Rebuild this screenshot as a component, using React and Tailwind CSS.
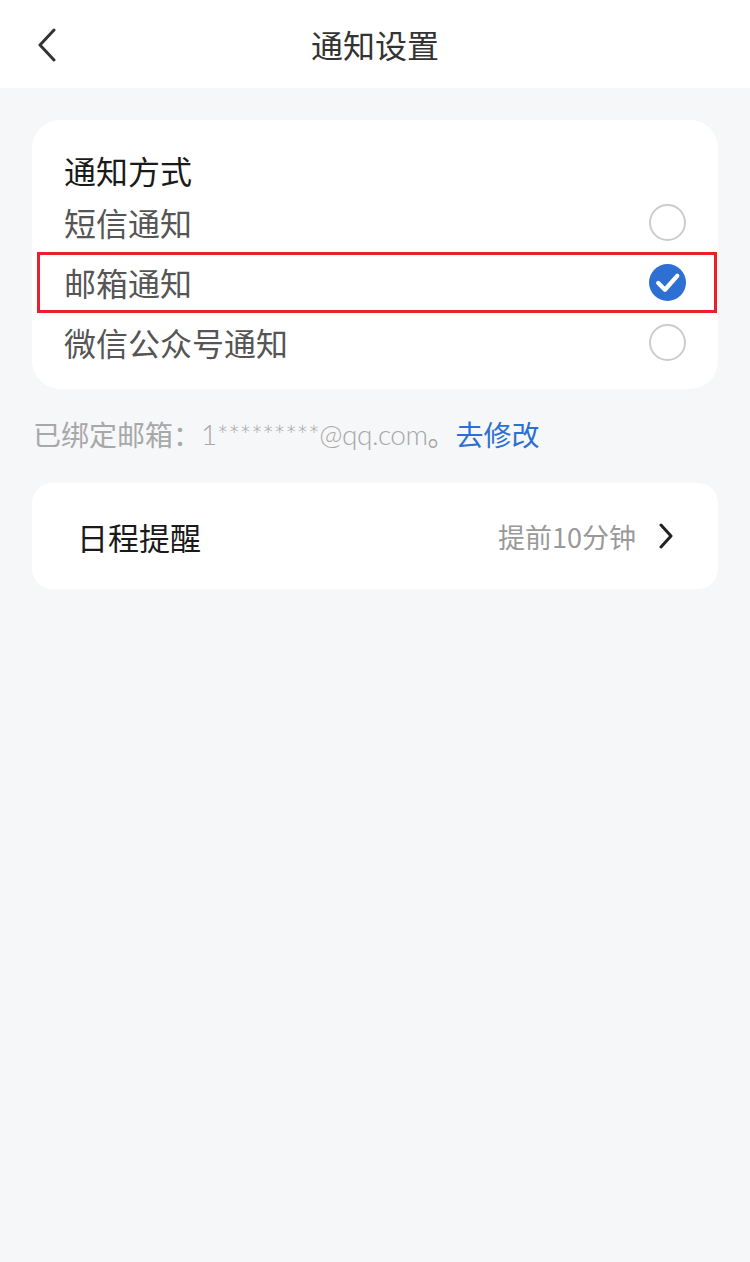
import React from "react";

const font = { fontFamily: '"Noto Sans CJK SC", "Noto Sans", sans-serif' };

function Radio({ checked }) {
  if (checked) {
    return (
      <svg width="37" height="37" viewBox="0 0 36 36">
        <circle cx="18" cy="18" r="18" fill="#2d6fd2" />
        <path d="M9 18.5 L15.5 25 L27.5 11.5" fill="none" stroke="#fff" strokeWidth="4.2" strokeLinecap="round" strokeLinejoin="round" />
      </svg>
    );
  }
  return <div className="w-[37px] h-[37px] rounded-full border-2 border-[#cccccc] box-border" />;
}

function Row({ label, checked, highlight }) {
  return (
    <div className="relative h-[60px] flex items-center justify-between pl-[32px] pr-[32px]">
      <span className="text-[32px] leading-none text-[#555555]">{label}</span>
      <Radio checked={checked} />
      {highlight && (
        <div className="absolute left-[5px] right-px top-0 bottom-[-1px] border-[3px] border-[#e8202a] pointer-events-none" />
      )}
    </div>
  );
}

export default function App() {
  return (
    <div style={font} className="w-[750px] min-h-[1262px] bg-[#f6f7f9]">
      <div className="h-[88px] bg-white relative flex items-center justify-center">
        <svg className="absolute left-[36px] top-[28px]" width="22" height="34" viewBox="0 0 22 34">
          <path d="M18 2 L4 17 L18 32" fill="none" stroke="#333" strokeWidth="3" strokeLinecap="round" strokeLinejoin="round" />
        </svg>
        <span className="text-[32px] leading-none text-[#333333]">通知设置</span>
      </div>

      <div className="px-[32px] pt-[32px]">
        <div className="bg-white rounded-[28px] pt-[32px] pb-[17px]">
          <div className="pl-[32px] text-[32px] leading-none text-[#1a1a1a] h-[36px] flex items-center mb-[4px]">通知方式</div>
          <Row label="短信通知" />
          <Row label="邮箱通知" checked highlight />
          <Row label="微信公众号通知" />
        </div>
      </div>

      <div className="pl-[33px] mt-[27px] text-[28px] leading-none text-[#a8a8a8] h-[36px] flex items-center">
        已绑定邮箱：<span style={{ fontFamily: 'Lato, "Noto Sans CJK SC", sans-serif' }} className="font-light tracking-[-0.5px]">1*********@qq.com</span>。<span className="text-[#2d6fd2]">去修改</span>
      </div>

      <div className="px-[32px] mt-[31px]">
        <div className="bg-white rounded-[20px] h-[106px] flex items-center justify-between pl-[45px] pr-[44px]">
          <span className="text-[31px] leading-none text-[#1a1a1a]">日程提醒</span>
          <div className="flex items-center gap-[22px]">
            <span className="text-[27px] leading-none text-[#999999]">提前10分钟</span>
            <svg width="16" height="26" viewBox="0 0 16 26">
              <path d="M3 2 L13 13 L3 24" fill="none" stroke="#222" strokeWidth="3" strokeLinecap="round" strokeLinejoin="round" />
            </svg>
          </div>
        </div>
      </div>
    </div>
  );
}
